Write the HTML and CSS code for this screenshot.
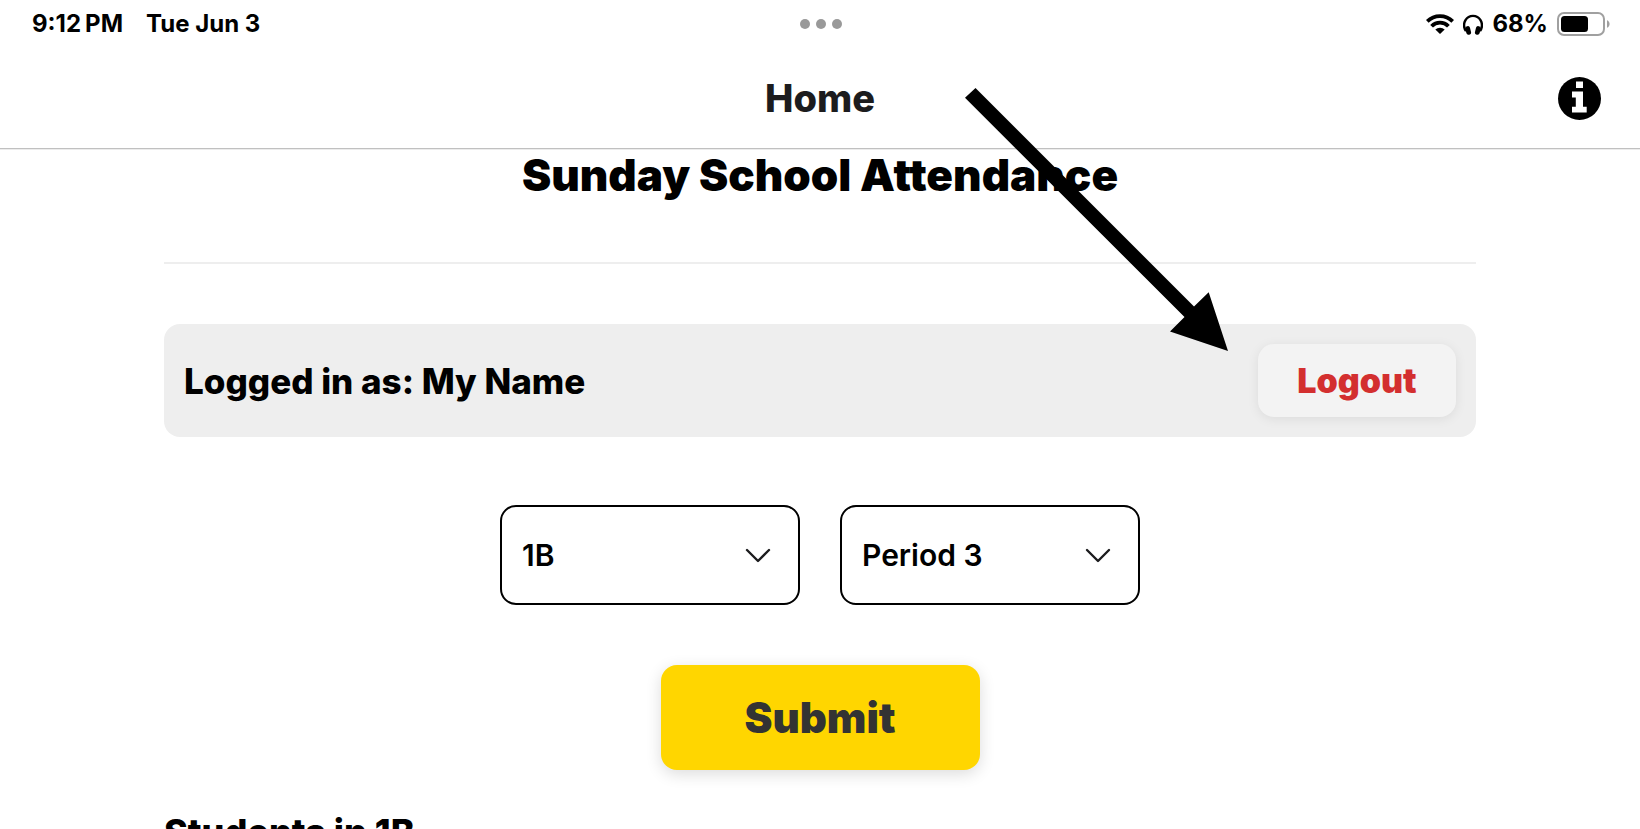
FILE: index.html
```html
<!DOCTYPE html>
<html lang="en">
<head>
<meta charset="utf-8">
<meta name="viewport" content="width=device-width, initial-scale=1">
<title>Sunday School Attendance</title>
<link rel="stylesheet" href="styles.css">
</head>
<body>
<div class="status-bar">
  <div class="status-left"><span>9:12<span class="meridiem">PM</span></span><span>Tue Jun 3</span></div>
  <div class="multitask"><i></i><i></i><i></i></div>
  <div class="status-right">
    <svg class="wifi" viewBox="0 0 28 20" width="28" height="20" aria-label="Wi-Fi">
      <g fill="none" stroke="#000" stroke-width="3.8">
        <path d="M1.300 7.400A18 18 0 0 1 26.700 7.400"/>
        <path d="M5.600 12.300A11.600 11.600 0 0 1 22.400 12.300"/>
      </g>
      <path d="M9.300 15.600A6.700 6.700 0 0 1 18.700 15.600L14 20Z"/>
    </svg>
    <svg class="headphones" viewBox="0 0 20 21" width="20" height="21" aria-label="Headphones">
      <path d="M3 17.200C.6 13.500.7 9.200 2.500 6.200A8.700 8.700 0 0 1 17.500 6.200C19.300 9.200 19.400 13.500 17 17.200" fill="none" stroke="#000" stroke-width="2.400"/>
      <rect x="2.800" y="12" width="4.800" height="8.800" rx="2.300" transform="rotate(-14 5.300 16.500)"/>
      <rect x="12.400" y="12" width="4.800" height="8.800" rx="2.300" transform="rotate(14 14.700 16.500)"/>
    </svg>
    <span>68%</span>
    <svg class="battery" viewBox="0 0 53 24" width="53" height="24" aria-label="Battery">
      <rect x="1" y="1" width="46" height="22" rx="6" fill="none" stroke="#a0a0a0" stroke-width="2"/>
      <rect x="4" y="4" width="27" height="16" rx="3.500"/>
      <path d="M50 8.200C53.400 9.300 53.400 14.700 50 15.800Z" fill="#a0a0a0"/>
    </svg>
  </div>
</div>
<header class="nav">
  <h2 class="nav-title">Home</h2>
  <button class="info" type="button" aria-label="Information">
    <svg viewBox="0 0 43 43" width="43" height="43">
      <circle cx="21.500" cy="21.500" r="21.500"/>
      <path fill="#fff" d="M18 4.500H25V11H18ZM14 14.500H25V29.800H28.700V35.600H14V29.800H17.800V20.500H14Z"/>
    </svg>
  </button>
</header>
<main class="page">
  <h1 class="title">Sunday School Attendance</h1>
  <hr class="rule">
  <section class="account">
    <span class="account-name">Logged in as: My Name</span>
    <button class="logout" type="button">Logout</button>
  </section>
  <form class="picker">
    <div class="selects">
      <div class="select-box">
        <select aria-label="Class"><option>1B</option></select>
        <svg viewBox="0 0 26 16" width="26" height="16"><path d="M2 3L13 14L24 3"/></svg>
      </div>
      <div class="select-box">
        <select aria-label="Period"><option>Period 3</option></select>
        <svg viewBox="0 0 26 16" width="26" height="16"><path d="M2 3L13 14L24 3"/></svg>
      </div>
    </div>
    <button class="submit" type="button">Submit</button>
  </form>
  <h2 class="students">Students in 1B</h2>
</main>
<svg class="arrow" viewBox="0 0 264 264" width="264" height="264" aria-hidden="true">
  <path d="M10.500 0L229 218.500L243.700 204.300L263 263L205 243.500L219.500 229L0 9.800Z"/>
</svg>
</body>
</html>
```
FILE: styles.css
```css
* { box-sizing: border-box; }
body {
  margin: 0;
  height: 100vh;
  display: flex;
  flex-direction: column;
  position: relative;
  overflow: hidden;
  background: #fff;
  color: #000;
  font-family: Inter, "Liberation Sans", sans-serif;
}
h1, h2 { margin: 0; }
button, select { font-family: inherit; }
button { border: 0; cursor: pointer; }

.status-bar {
  flex: none;
  display: grid;
  grid-template-columns: 1fr auto 1fr;
  align-items: center;
  height: 48px;
  padding: 0 30px 0 32px;
  font-size: 24px;
  line-height: 28px;
  font-weight: 700;
}
.status-left { display: flex; gap: 23px; }
.meridiem { margin-left: 4px; }
.multitask { display: flex; gap: 6px; }
.multitask i { width: 10px; height: 10px; border-radius: 50%; background: #999; }
.status-right { display: flex; justify-content: flex-end; align-items: center; gap: 9px; }

.nav {
  flex: none;
  display: grid;
  grid-template-columns: 1fr auto 1fr;
  align-items: center;
  height: 101px;
  padding: 0 39px;
  border-bottom: 1px solid #c0c0c0;
  box-shadow: 0 1px 0 #ececec;
}
.nav-title { grid-column: 2; font-size: 38px; line-height: 48px; font-weight: 800; color: #1c1c1e; }
.info { justify-self: end; padding: 0; background: none; line-height: 0; border-radius: 50%; }

.page {
  flex: 1;
  min-height: 0;
  overflow-y: auto;
  scrollbar-width: none;
  padding: 0 10%;
}
.title { font-size: 44px; line-height: 52px; font-weight: 900; text-align: center; }
.rule { height: 2px; margin: 61px 0 60px; border: 0; background: #eee; }
.account {
  display: flex;
  justify-content: space-between;
  align-items: center;
  padding: 20px;
  border-radius: 16px;
  background: #eee;
}
.account-name { font-size: 35px; font-weight: 800; }
.logout {
  min-width: 198px;
  padding: 16px 36px;
  border-radius: 16px;
  background: #f3f3f3;
  box-shadow: 0 2px 12px rgba(0, 0, 0, .08);
  color: #d32f2f;
  font-size: 34px;
  line-height: 41px;
  font-weight: 900;
}
.picker { display: flex; flex-direction: column; align-items: center; gap: 60px; margin: 68px 0 40px; }
.selects { display: flex; gap: 40px; }
.select-box { display: grid; align-items: center; width: 300px; }
.select-box > * { grid-area: 1 / 1; }
.select-box select {
  appearance: none;
  height: 100px;
  padding: 0 20px;
  border: 2px solid #000;
  border-radius: 16px;
  background: #fff;
  color: #000;
  font-size: 30px;
  font-weight: 600;
}
.select-box svg {
  justify-self: end;
  margin-right: 29px;
  pointer-events: none;
  fill: none;
  stroke: #1c1c1e;
  stroke-width: 2.4;
  stroke-linecap: round;
  stroke-linejoin: round;
}
.submit {
  min-width: 319px;
  padding: 28px 80px;
  border-radius: 16px;
  background: #ffd600;
  box-shadow: 0 4px 16px rgba(0, 0, 0, .14);
  color: #333;
  font-size: 42px;
  line-height: 49px;
  font-weight: 900;
}
.students { font-size: 36px; line-height: 44px; font-weight: 800; }

.arrow { position: absolute; left: 965px; top: 88px; pointer-events: none; }
```
